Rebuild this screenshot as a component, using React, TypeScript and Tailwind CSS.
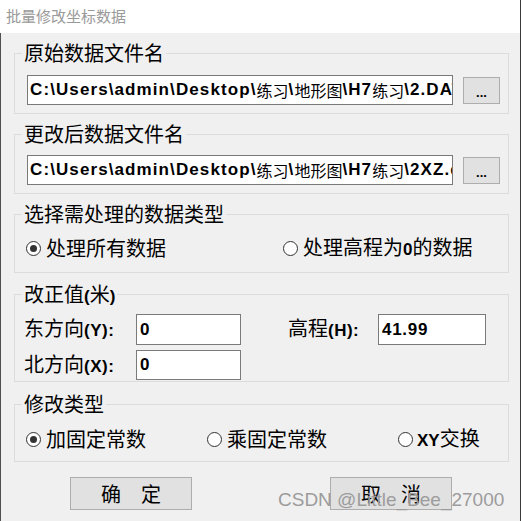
import React from 'react';

const cjk = "font-['Noto_Sans_CJK_SC',sans-serif]";
const bold = "font-['Liberation_Sans',Arial,sans-serif] font-bold";

const Radio: React.FC<{ checked?: boolean }> = ({ checked }) => (
  <span className="w-[15px] h-[15px] shrink-0 rounded-full border border-[#333333] bg-white flex items-center justify-center">
    {checked && <span className="w-[7px] h-[7px] rounded-full bg-[#333333]"></span>}
  </span>
);

const Group: React.FC<{ title: React.ReactNode; className: string; children: React.ReactNode }> = ({ title, className, children }) => (
  <div className={`ml-[13px] w-[495px] border border-[#dcdcdc] flex flex-col ${className}`}>
    <div className="-mt-[11px] ml-[7px] px-[2px] w-fit bg-[#f0f0f0] text-[20px] leading-[20px] text-black">{title}</div>
    {children}
  </div>
);

const PathBox: React.FC<{ tail: string }> = ({ tail }) => (
  <div className="w-[426px] h-[30px] border border-[#7a7a7a] bg-white overflow-hidden whitespace-nowrap flex items-center pl-[2px] text-black">
    <span className={`${bold} text-[17px] tracking-[1.1px]`}>{'C:\\Users\\admin\\Desktop\\'}</span>
    <span className="text-[16px]">练习</span>
    <span className={`${bold} text-[17px] tracking-[1.1px]`}>{'\\'}</span>
    <span className="text-[16px]">地形图</span>
    <span className={`${bold} text-[17px] tracking-[1.1px]`}>{'\\H7'}</span>
    <span className="text-[16px]">练习</span>
    <span className={`${bold} text-[17px] tracking-[1.1px]`}>{'\\' + tail}</span>
  </div>
);

const Browse = () => (
  <button className="w-[37px] h-[27px] border border-[#adadad] bg-[#e1e1e1] flex items-center justify-center">
    <span className={`${bold} text-[13px] leading-none text-black pt-[4px]`}>...</span>
  </button>
);

const Field: React.FC<{ value: string; className: string }> = ({ value, className }) => (
  <div className={`border border-[#7a7a7a] bg-white flex items-center pl-[3px] ${className}`}>
    <span className={`${bold} text-[17px] tracking-[0.7px] text-black`}>{value}</span>
  </div>
);

export default function App() {
  return (
    <div className={`w-[522px] h-[521px] bg-white relative overflow-hidden ${cjk}`}>
      <div className="w-[521px] h-[521px] border-r border-[#3a3a3a] flex flex-col">
        <div className="h-[33px] shrink-0 bg-white flex items-center pl-[6px] text-[15px] text-[#9a9a9a]">
          批量修改坐标数据
        </div>

        <div className="flex-1 bg-[#f0f0f0] border-l border-[#505050] flex flex-col">
          <Group title="原始数据文件名" className="mt-[20px] h-[61px]">
            <div className="mt-[12px] flex items-center pl-[12px] gap-[10px]">
              <PathBox tail="2.DAT" />
              <Browse />
            </div>
          </Group>

          <Group title="更改后数据文件名" className="mt-[20px] h-[60px]">
            <div className="mt-[11px] flex items-center pl-[12px] gap-[10px]">
              <PathBox tail="2XZ.dat" />
              <Browse />
            </div>
          </Group>

          <Group title="选择需处理的数据类型" className="mt-[20px] h-[59px]">
            <div className="mt-[14px] h-[20px] flex items-center pl-[11px] text-[20px] leading-[20px] text-black">
              <div className="w-[257px] flex items-center gap-[5px]">
                <Radio checked />
                <span>处理所有数据</span>
              </div>
              <div className="flex items-center gap-[5px]">
                <Radio />
                <span>处理高程为<span className={`${bold} text-[17px]`}>0</span>的数据</span>
              </div>
            </div>
          </Group>

          <Group
            title={<span>改正值<span className={`${bold} text-[17px]`}>(</span>米<span className={`${bold} text-[17px]`}>)</span></span>}
            className="mt-[21px] h-[88px]"
          >
            <div className="mt-[7px] flex items-center pl-[9px] text-[20px] leading-[20px] text-black">
              <span className="w-[112px]">东方向<span className={`${bold} text-[17px] tracking-[0.5px]`}>(Y):</span></span>
              <Field value="0" className="w-[105px] h-[31px]" />
              <span className="ml-[47px] w-[90px]">高程<span className={`${bold} text-[17px] tracking-[0.5px]`}>(H):</span></span>
              <Field value="41.99" className="w-[108px] h-[31px]" />
            </div>
            <div className="mt-[5px] flex items-center pl-[9px] text-[20px] leading-[20px] text-black">
              <span className="w-[112px]">北方向<span className={`${bold} text-[17px] tracking-[0.5px]`}>(X):</span></span>
              <Field value="0" className="w-[105px] h-[30px]" />
            </div>
          </Group>

          <Group title="修改类型" className="mt-[22px] h-[58px]">
            <div className="mt-[15px] h-[20px] flex items-center pl-[11px] text-[20px] leading-[20px] text-black">
              <div className="w-[181px] flex items-center gap-[5px]">
                <Radio checked />
                <span>加固定常数</span>
              </div>
              <div className="w-[191px] flex items-center gap-[5px]">
                <Radio />
                <span>乘固定常数</span>
              </div>
              <div className="flex items-center gap-[4px]">
                <Radio />
                <span><span className={`${bold} text-[17px]`}>XY</span>交换</span>
              </div>
            </div>
          </Group>

          <div className="mt-[15px] flex items-center pl-[69px] gap-[138px]">
            <button className="w-[122px] h-[33px] border border-[#adadad] bg-[#e1e1e1] text-[20px] text-black">确　定</button>
            <button className="w-[122px] h-[33px] border border-[#adadad] bg-[#e1e1e1] text-[20px] text-black">取　消</button>
          </div>
        </div>
      </div>

      <div className="absolute left-[278px] top-[489px] leading-[22px] text-[19px] font-['Liberation_Sans',Arial,sans-serif] text-[#9c9c9c] whitespace-nowrap">
        CSDN @Little_Bee_27000
      </div>
    </div>
  );
}
